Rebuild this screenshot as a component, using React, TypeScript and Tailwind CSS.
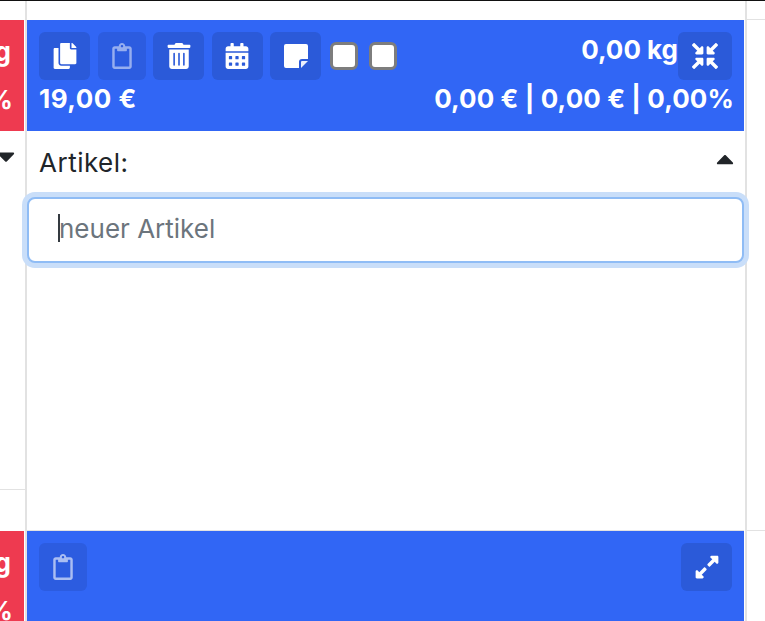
import { FaCopy, FaRegClipboard, FaTrashAlt, FaCalendarAlt, FaCompressArrowsAlt, FaExpandAlt, FaCaretDown, FaCaretUp } from "react-icons/fa";
import type { ReactNode } from "react";

const font = { fontFamily: "Inter, 'Liberation Sans', sans-serif" };

function Btn({ children, w, faded }: { children: ReactNode; w: string; faded?: boolean }) {
  return (
    <div className={`${w} h-12 shrink-0 rounded-md flex items-center justify-center text-white text-[26px] ${faded ? "bg-[#2c5ce0]" : "bg-[#2b5ad9]"}`}>
      {children}
    </div>
  );
}

function Check() {
  return <div className="w-7 h-7 rounded-md bg-white border-[3px] border-[#7d7d7d]" />;
}

function NoteIcon() {
  return (
    <svg width="24" height="24" viewBox="0 0 24 24" fill="#fff">
      <path d="M2 0h20a2 2 0 0 1 2 2v13h-6a3 3 0 0 0-3 3v6H2a2 2 0 0 1-2-2V2a2 2 0 0 1 2-2z" />
      <path d="M17 24v-6a1 1 0 0 1 1-1h6z" opacity="0.9" />
    </svg>
  );
}

function RedStub({ className }: { className: string }) {
  return (
    <div className={`w-6 bg-[#ee3a50] text-white font-bold text-[26px] overflow-hidden flex flex-col items-end ${className}`}>
      <span className="mr-[13px] mt-[14px] leading-9 whitespace-nowrap">0,00 kg</span>
      <span className="mr-[11px] mt-[12px] leading-9 whitespace-nowrap">0,00%</span>
    </div>
  );
}

export default function App() {
  return (
    <div style={font} className="w-[765px] h-[621px] overflow-hidden bg-white flex text-[#212529] border-t border-[#111]">
      <div className="w-[27px] shrink-0 border-r-2 border-[#e2e2e2] flex flex-col pt-[19px]">
        <RedStub className="h-[111px] shrink-0" />
        <div className="h-[359px] shrink-0 border-b border-[#e2e2e2] pt-[11px] -mr-px">
          <FaCaretDown className="text-[#212529] text-[28px] -ml-[8px]" />
        </div>
        <div className="h-[41px] shrink-0" />
        <RedStub className="flex-1" />
      </div>
      <div className="w-[718px] shrink-0 flex flex-col pt-[19px] pr-px">
        <div className="h-[111px] shrink-0 bg-[#3166f5] pl-3 pr-3 pt-3 text-white font-bold flex flex-col">
          <div className="flex items-start">
            <div className="flex gap-[7.5px] items-center">
              <Btn w="w-[51px]"><FaCopy /></Btn>
              <Btn w="w-12" faded><FaRegClipboard className="opacity-50" /></Btn>
              <Btn w="w-[51px]"><FaTrashAlt /></Btn>
              <Btn w="w-[51px]"><FaCalendarAlt /></Btn>
              <Btn w="w-[51px]"><NoteIcon /></Btn>
              <div className="flex gap-[11px] ml-[1px]">
                <Check />
                <Check />
              </div>
            </div>
            <div className="ml-auto flex items-start">
              <span className="text-[26px] leading-9">0,00 kg</span>
              <Btn w="w-[54px]"><FaCompressArrowsAlt /></Btn>
            </div>
          </div>
          <div className="flex justify-between text-[26px] leading-9 pt-[1px]">
            <span className="tracking-[0.5px]">19,00 €</span>
            <span className="tracking-[0.1px] -mr-[2px]">0,00 € | 0,00 € | 0,00%</span>
          </div>
        </div>
        <div className="h-[400px] shrink-0 border-b border-[#e2e2e2] px-3 relative">
          <div className="flex items-center justify-between h-[66px] pb-[4px]">
            <span className="text-[26px] tracking-[0.5px]">Artikel:</span>
            <FaCaretUp className="text-[28px] -mt-[6px] -mr-[7px]" />
          </div>
          <div className="-mx-3 h-[66px] rounded-lg border-2 border-[#8fbcf5] shadow-[0_0_0_5px_#c9def9] flex items-center pl-[30px] pb-[4px] text-[26px] text-[#6c757d] bg-white">
            <span className="w-[2px] h-7 bg-[#343a40] -ml-px -mr-px shrink-0" />
            <span>neuer Artikel</span>
          </div>
        </div>
        <div className="flex-1 bg-[#3166f5] px-3 pt-3 flex justify-between items-start">
          <Btn w="w-12" faded><FaRegClipboard className="opacity-60" /></Btn>
          <Btn w="w-[51px]"><FaExpandAlt /></Btn>
        </div>
      </div>
      <div className="flex-1 flex flex-col border-l-2 border-[#e2e2e2]">
        <div className="h-[19px] shrink-0 border-b border-[#e2e2e2]" />
        <div className="h-[511px] shrink-0 border-b border-[#e2e2e2]" />
      </div>
    </div>
  );
}
